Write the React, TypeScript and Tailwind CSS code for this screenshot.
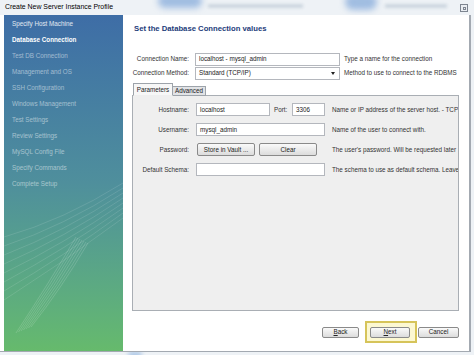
import React from "react";

const font = "font-['Liberation_Sans',Arial,sans-serif]";

const steps = [
  { label: "Specify Host Machine", state: "done" },
  { label: "Database Connection", state: "current" },
  { label: "Test DB Connection", state: "todo" },
  { label: "Management and OS", state: "todo" },
  { label: "SSH Configuration", state: "todo" },
  { label: "Windows Management", state: "todo" },
  { label: "Test Settings", state: "todo" },
  { label: "Review Settings", state: "todo" },
  { label: "MySQL Config File", state: "todo" },
  { label: "Specify Commands", state: "todo" },
  { label: "Complete Setup", state: "todo" },
];

function TextBox({ value, className }: { value: string; className: string }) {
  return (
    <div
      className={`h-[13px] shrink-0 bg-white border border-[#b4b7bd] pl-[3px] flex items-center text-[6.3px] text-[#222] ${className}`}
    >
      {value}
    </div>
  );
}

function Button({ children, className }: { children: React.ReactNode; className: string }) {
  return (
    <div
      className={`shrink-0 flex items-center justify-center rounded-[2px] border border-[#8a8a8a] bg-gradient-to-b from-[#fafafa] to-[#dcdcdc] text-[6.3px] text-[#222] ${className}`}
    >
      {children}
    </div>
  );
}

function SidebarArt() {
  return (
    <svg className="absolute inset-0" width="119" height="336" viewBox="0 0 119 336" fill="none">
      {[0, 1, 2, 3, 4, 5, 6].map((i) => (
        <path
          key={"a" + i}
          d={`M${72 + i * 2} ${222 + i} Q${45 + i * 2} ${268 + i} ${12 + i * 2.5} ${318 - i}`}
          stroke="white"
          strokeOpacity="0.26"
          strokeWidth="0.6"
        />
      ))}
      {[0, 1, 2, 3, 4, 5, 6, 7].map((i) => (
        <path
          key={"b" + i}
          d={`M119 ${168 + i * 5} Q60 ${205 + i * 6} 0 ${222 + i * 9}`}
          stroke="white"
          strokeOpacity="0.2"
          strokeWidth="0.6"
        />
      ))}
    </svg>
  );
}

export default function App() {
  return (
    <div className={`relative w-[474px] h-[355px] overflow-hidden bg-[#eef2f6] ${font}`}>
      {/* blurred glass behind the title */}
      <div className="absolute left-[158px] top-[-6px] w-[44px] h-[14px] rounded-full bg-[#6d9ad4]/60 blur-[3px]" />
      <div className="absolute left-[345px] top-[-6px] w-[32px] h-[16px] rounded-full bg-[#6d9ad4]/60 blur-[3px]" />
      <div className="absolute left-[208px] top-[4px] w-[95px] h-[4px] bg-[#b8c4d2]/60 blur-[1.5px]" />
      <div className="absolute left-[385px] top-[4px] w-[62px] h-[4px] bg-[#b8c4d2]/60 blur-[1.5px]" />
      <div className="absolute left-[128px] top-[351px] w-[14px] h-[8px] rounded-full bg-[#8fb4e0]/60 blur-[2px]" />

      {/* Title bar */}
      <div className="relative h-[15px] flex items-center pl-[5px]">
        <span className="text-[6.9px] text-black">Create New Server Instance Profile</span>
        <div className="absolute left-[460px] top-[4px] w-[8px] h-[8px] border border-[#7d8590] bg-[#e9edf2] flex items-center justify-center">
          <div className="w-[3px] h-[3px] border border-[#7d8590]" />
        </div>
      </div>

      {/* Window */}
      <div className="relative flex w-[471px] h-[337px] bg-white pl-[4px] border-r-2 border-b border-[#a3a9b1]">
        {/* Sidebar */}
        <div className="relative w-[119px] h-full overflow-hidden bg-gradient-to-b from-[#3e6da6] via-[#4f8f9c] to-[#66ba6c]">
          <SidebarArt />
          <div className="relative pt-[1px] pl-[8px]">
            {steps.map((s) => (
              <div
                key={s.label}
                className={`h-[16px] flex items-center text-[6.3px] ${
                  s.state === "current"
                    ? "font-bold text-white"
                    : s.state === "done"
                    ? "text-white/85"
                    : "text-white/50"
                }`}
              >
                {s.label}
              </div>
            ))}
          </div>
        </div>

        {/* Main */}
        <div className="flex-1 flex flex-col">
          <div className="h-[28px] flex items-center pl-[11px] text-[7.7px] font-bold text-[#1d3c7a]">
            Set the Database Connection values
          </div>

          <div className="mt-[9px] flex flex-col text-[6.3px] text-[#333]">
            <div className="h-[14px] flex items-center">
              <div className="w-[66px] shrink-0 text-right">Connection Name:</div>
              <TextBox value="localhost - mysql_admin" className="ml-[6px] w-[145px]" />
              <div className="ml-[4px] whitespace-nowrap">Type a name for the connection</div>
            </div>
            <div className="h-[14px] flex items-center">
              <div className="w-[66px] shrink-0 text-right">Connection Method:</div>
              <div className="ml-[6px] w-[145px] h-[13px] shrink-0 bg-white border border-[#b4b7bd] pl-[3px] pr-[4px] flex items-center justify-between text-[#222]">
                <span>Standard (TCP/IP)</span>
                <span className="w-0 h-0 border-l-[2px] border-r-[2px] border-t-[3px] border-l-transparent border-r-transparent border-t-[#222]" />
              </div>
              <div className="ml-[4px] whitespace-nowrap">Method to use to connect to the RDBMS</div>
            </div>
          </div>

          {/* Tabs */}
          <div className="mt-[3px] ml-[10px] flex items-end -mb-px relative z-10 text-[6.3px] text-[#222]">
            <div className="h-[13px] w-[40px] flex items-center justify-center bg-[#f7f7f7] border border-[#9da3aa] border-b-[#efefef]">
              Parameters
            </div>
            <div className="h-[10px] w-[33px] flex items-center justify-center bg-[#e1e3e6] border border-l-0 border-[#9da3aa]">
              Advanced
            </div>
          </div>
          <div className="ml-[9px] w-[327px] h-[216px] bg-[#efefef] border border-[#a9aeb4] overflow-hidden">
            <div className="pt-[7px] flex flex-col gap-[7px] text-[6.3px] text-[#333] whitespace-nowrap">
              <div className="h-[13px] flex items-center">
                <div className="w-[56px] shrink-0 text-right">Hostname:</div>
                <TextBox value="localhost" className="ml-[7px] w-[74px]" />
                <div className="ml-[4px] w-[18px] shrink-0">Port:</div>
                <TextBox value="3306" className="w-[33px]" />
                <div className="ml-[7px]">Name or IP address of the server host. - TCP</div>
              </div>
              <div className="h-[13px] flex items-center">
                <div className="w-[56px] shrink-0 text-right">Username:</div>
                <TextBox value="mysql_admin" className="ml-[7px] w-[129px]" />
                <div className="ml-[7px]">Name of the user to connect with.</div>
              </div>
              <div className="h-[13px] flex items-center">
                <div className="w-[56px] shrink-0 text-right">Password:</div>
                <Button className="ml-[8px] w-[58px] h-[13px]">Store in Vault ...</Button>
                <Button className="ml-[4px] w-[58px] h-[13px]">Clear</Button>
                <div className="ml-[15px]">The user's password. Will be requested later</div>
              </div>
              <div className="h-[13px] flex items-center">
                <div className="w-[56px] shrink-0 text-right">Default Schema:</div>
                <TextBox value="" className="ml-[7px] w-[129px]" />
                <div className="ml-[7px]">The schema to use as default schema. Leave</div>
              </div>
            </div>
          </div>

          {/* Bottom buttons */}
          <div className="mt-[10px] h-[22px] flex items-center justify-end pr-[10px]">
            <Button className="w-[37px] h-[11px]">
              <span className="underline">B</span>ack
            </Button>
            <div className="ml-[6px] w-[52px] h-[22px] border-2 border-[#d6c45a] bg-[#fcf8d2] flex items-center pl-[3px]">
              <Button className="w-[40px] h-[11px]">
                <span className="underline">N</span>ext
              </Button>
            </div>
            <Button className="ml-[1px] w-[41px] h-[11px]">Cancel</Button>
          </div>
        </div>
      </div>
    </div>
  );
}
